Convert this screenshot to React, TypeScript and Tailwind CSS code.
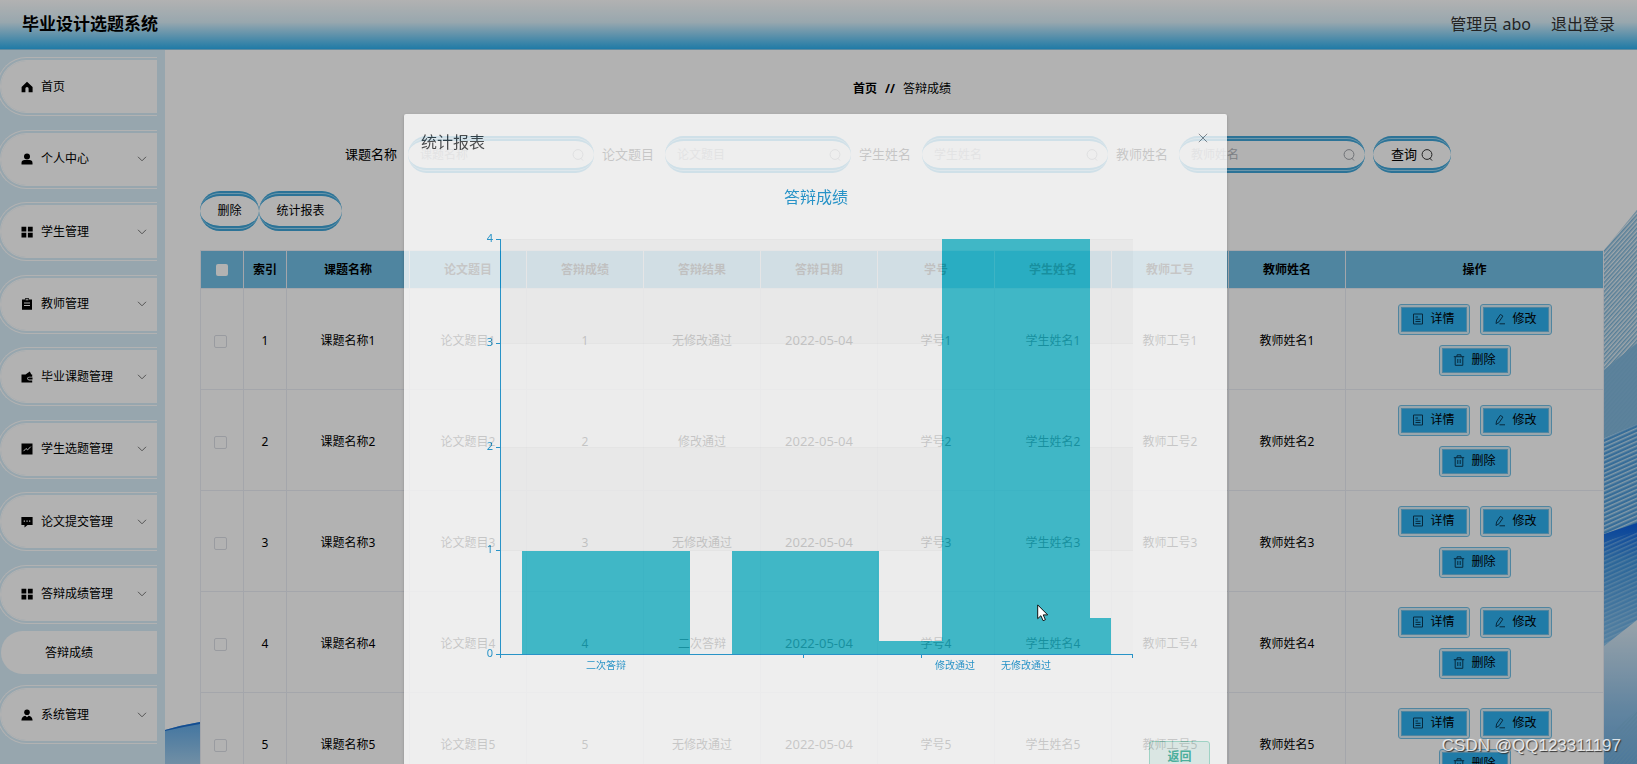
import React from 'react'

const menu = [
  { label: '首页', icon: 'home' },
  { label: '个人中心', icon: 'user', arrow: true },
  { label: '学生管理', icon: 'grid', arrow: true },
  { label: '教师管理', icon: 'order', arrow: true },
  { label: '毕业课题管理', icon: 'wallet', arrow: true },
  { label: '学生选题管理', icon: 'marketing', arrow: true },
  { label: '论文提交管理', icon: 'comment', arrow: true },
  { label: '答辩成绩管理', icon: 'grid', arrow: true },
]

const filters = ['课题名称', '论文题目', '学生姓名', '教师姓名']

const columns = [
  '课题名称',
  '论文题目',
  '答辩成绩',
  '答辩结果',
  '答辩日期',
  '学号',
  '学生姓名',
  '教师工号',
  '教师姓名',
]

const results = ['无修改通过', '修改通过', '无修改通过', '二次答辩', '无修改通过']

const MenuIcon = ({ name }: { name: string }) => (
  <svg viewBox="0 0 12 12" className="size-3 shrink-0" fill="#000" aria-hidden="true">
    {name === 'home' && <path d="M6 .8 11.6 6v5.2H7.6V7.6a1.6 1.6 0 0 0-3.2 0v3.6H.6V6z" />}
    {name === 'user' && (
      <>
        <circle cx="6" cy="3.4" r="3" />
        <path d="M.5 11.5V10c0-2 1.3-2.9 3-2.9h5c1.7 0 3 .9 3 2.9v1.5z" />
      </>
    )}
    {name === 'grid' && <path d="M.5.7h4.8v4.8H.5zM6.900.7h4.800v4.800H6.900zM.5 6.800h4.800v4.800H.5zM6.900 6.800h4.800v4.800H6.900z" />}
    {name === 'order' && (
      <path
        fillRule="evenodd"
        d="M1 1.500h3V.3h4v1.200h3v10.300H1zM3 4.500v1h6v-1zM3 7v1h6V7zM4.600 1.200v1h2.800v-1z"
      />
    )}
    {name === 'wallet' && (
      <path
        fillRule="evenodd"
        d="M.5 3.600h4L8.800.6l1.500 3h.9v2.200H8a1.700 1.700 0 0 0 0 3.600h3.200v2H.5zM8 6.600h3.500v2H8a1 1 0 0 1 0-2z"
      />
    )}
    {name === 'marketing' && (
      <>
        <path d="M.5.5h11v11H.5z" />
        <path d="M2.500 8.200 5 5.500l1.600 1.400L9.800 3.600" fill="none" stroke="#fff" strokeWidth="1" />
      </>
    )}
    {name === 'comment' && (
      <path
        fillRule="evenodd"
        d="M.4 1h11.200v8H6.500l-3 2.600V9H.4zM2.700 4.400v1.300H4V4.400zM5.400 4.400v1.300h1.300V4.400zM8 4.400v1.300h1.300V4.400z"
      />
    )}
    {name === 'admin' && (
      <>
        <circle cx="6" cy="3.200" r="2.800" />
        <path d="M.4 11.500c0-2.800 1.600-4.400 4-4.800L6 8.200l1.600-1.500c2.400.4 4 2 4 4.800z" />
      </>
    )}
  </svg>
)

const Chevron = () => (
  <svg viewBox="0 0 10 6" className="ml-auto h-1.5 w-2.5" fill="none" stroke="#777" aria-hidden="true">
    <path d="M1 .8 5 4.800 9 .8" />
  </svg>
)

const SearchIcon = ({ color }: { color: string }) => (
  <svg viewBox="0 0 12 12" className="size-3 shrink-0" fill="none" stroke={color} aria-hidden="true">
    <circle cx="6" cy="5.500" r="4.900" />
    <path d="M8.600 9 11 11.500" />
  </svg>
)

const ActionIcon = ({ name }: { name: string }) => (
  <svg viewBox="0 0 12 12" className="size-3 shrink-0" fill="none" stroke="#0b3c58" aria-hidden="true">
    {name === '详情' && <path d="M1.500 1h9v10h-9zM3.500 4H6M3.500 6.300h5M3.500 8.500h5" />}
    {name === '修改' && <path d="M2 10.500 2.600 7l3.800-5.600 2.500 1.700L5 8.800zM5.500 10.800H11" />}
    {name === '删除' && <path d="M.8 2.700h10.400M4 2.500V.8h4v1.700M2.200 2.700v8.600h7.600V2.700M4.800 5v4M7.200 5v4" />}
  </svg>
)

const MenuItem = ({ label, icon, arrow }: { label: string; icon: string; arrow?: boolean }) => (
  <li>
    <button
      type="button"
      className="-ml-[3px] flex h-[59px] w-[160px] items-center rounded-l-[30px] border-4 border-r-0 border-double border-white bg-white bg-clip-padding pl-5 pr-2.5 text-xs text-black"
    >
      <MenuIcon name={icon} />
      <span className="ml-2">{label}</span>
      {arrow && <Chevron />}
    </button>
  </li>
)

const Header = () => (
  <header className="flex h-[50px] items-center justify-between border-b border-[#8cc8e6] bg-[linear-gradient(#fff,#dbf0fa_45%,#2eb0ef)] pl-[22px] pr-[22px] pb-0.5">
    <h1 className="text-[17px] font-bold text-black">毕业设计选题系统</h1>
    <div className="flex gap-5 text-base text-[#333]">
      <span>管理员 abo</span>
      <button type="button">退出登录</button>
    </div>
  </header>
)

const Sidebar = () => (
  <nav className="w-[165px] shrink-0 bg-[#d8eefa] pt-[7px]">
    <ul className="flex h-[567px] flex-col justify-between">
      {menu.map((item) => (
        <MenuItem key={item.label} {...item} />
      ))}
    </ul>
    <a
      href="#score"
      className="ml-px mt-[7px] flex h-[43px] w-[156px] items-center rounded-l-[22px] bg-white pl-11 text-xs text-black"
    >
      答辩成绩
    </a>
    <ul className="mt-[11px]">
      <MenuItem label="系统管理" icon="admin" arrow />
    </ul>
  </nav>
)

const Backdrop = () => (
  <>
    <svg viewBox="0 0 33 554" className="absolute bottom-0 right-0 h-[554px] w-[33px]" aria-hidden="true">
      <defs>
        <pattern id="fine" width="3" height="3" patternUnits="userSpaceOnUse" patternTransform="rotate(-48)">
          <rect width="3" height="1.500" fill="#7db6da" />
        </pattern>
        <pattern id="wide" width="4" height="4" patternUnits="userSpaceOnUse" patternTransform="rotate(-24)">
          <rect width="4" height="1.500" fill="#b9dcf2" />
        </pattern>
        <linearGradient id="deep" x1="0" y1="0" x2="0" y2="1">
          <stop offset="0" stopColor="#0b5fe0" />
          <stop offset=".3" stopColor="#3f93dc" />
          <stop offset="1" stopColor="#7fbce8" />
        </linearGradient>
        <linearGradient id="pale" x1="0" y1="0" x2="0" y2="1">
          <stop offset="0" stopColor="#dceaf4" />
          <stop offset=".6" stopColor="#8fc0e6" />
          <stop offset="1" stopColor="#6cabdf" />
        </linearGradient>
      </defs>
      <path d="M0 40 33 0V554H0z" fill="#e2eef5" />
      <path d="M0 40 33 0V554H0z" fill="url(#fine)" />
      <path d="M0 160 33 133V323H0z" fill="#86bbe0" />
      <path d="M0 160 33 133V230H0z" fill="url(#fine)" opacity=".6" />
      <path d="M0 228 33 214V323H0z" fill="#4f9cda" />
      <path d="M0 228 33 214V323H0z" fill="url(#wide)" />
      <path d="M0 324 33 313V420L0 440z" fill="url(#deep)" />
      <path d="M0 332 33 321V420L0 440z" fill="url(#wide)" opacity=".4" />
      <path d="M0 436 33 410V554H0z" fill="url(#pale)" />
      <path d="M0 530 33 500V554H0z" fill="url(#fine)" opacity=".7" />
    </svg>
    <svg viewBox="0 0 35 42" className="absolute bottom-0 left-0 h-[42px] w-[35px]" aria-hidden="true">
      <defs>
        <linearGradient id="wave" x1="0" y1="0" x2="0" y2="1">
          <stop offset="0" stopColor="#5fa8e6" />
          <stop offset="1" stopColor="#a2cdec" />
        </linearGradient>
      </defs>
      <path d="M0 8Q17 3 35 0V42H0z" fill="url(#wave)" />
      <path d="M0 8Q17 3 35 0V2Q17 5 0 9z" fill="#1c6fd0" />
    </svg>
  </>
)

const pill =
  'rounded-[20px] border-y-[5px] border-double border-[#3fa5d8] [background:linear-gradient(#fff,#fff)_padding-box,#9ad6f2_border-box]'

const SearchForm = () => (
  <form className="flex justify-center text-[13px] text-black">
    {filters.map((name) => (
      <div key={name} className="mr-2 flex items-center">
        <label htmlFor={name} className="mr-[11px]">
          {name}
        </label>
        <div className={`flex h-[37px] w-[186px] items-center pl-3 pr-2.5 ${pill}`}>
          <input
            id={name}
            placeholder={name}
            className="w-full min-w-0 bg-transparent text-xs outline-none placeholder:text-[#b4b8be]"
          />
          <SearchIcon color="#a0a4aa" />
        </div>
      </div>
    ))}
    <button type="button" className={`mr-2 flex h-[37px] w-[78px] items-center justify-center gap-1 ${pill}`}>
      查询
      <SearchIcon color="#333" />
    </button>
  </form>
)

const RowButton = ({ label }: { label: string }) => (
  <button
    type="button"
    className="flex h-[31px] w-[72px] items-center justify-center gap-1.5 rounded-[3px] border-4 border-double border-[#71bfe5] [background:linear-gradient(#2eb0f0,#2eb0f0)_padding-box,#dceef7_border-box]"
  >
    <ActionIcon name={label} />
    {label}
  </button>
)

const cell = 'border border-[#ebeef5] px-0 pb-0 pt-[3px]'
const headCell = 'border border-[#ebeef5] px-0 pb-0 pt-px font-bold'

const ScoreTable = () => (
  <table className="w-full table-fixed border-collapse bg-white text-center text-xs text-black">
    <colgroup>
      <col className="w-[43px]" />
      <col className="w-[43px]" />
      <col className="w-[123px]" />
      {columns.slice(1).map((name) => (
        <col key={name} className="w-[117px]" />
      ))}
      <col className="w-[258px]" />
    </colgroup>
    <thead>
      <tr className="h-[38px] bg-[#71bfe5]">
        <th className={headCell}>
          <input
            type="checkbox"
            aria-label="全选"
            className="mx-auto block size-3 appearance-none rounded-[2px] bg-white"
          />
        </th>
        <th className={headCell}>索引</th>
        {columns.map((name) => (
          <th key={name} className={headCell}>
            {name}
          </th>
        ))}
        <th className={headCell}>操作</th>
      </tr>
    </thead>
    <tbody>
      {results.map((result, i) => {
        const n = i + 1
        return (
          <tr key={n} className="h-[101px]">
            <td className={cell}>
              <input
                type="checkbox"
                aria-label={`选择${n}`}
                className="mr-1 inline-block size-[13px] appearance-none rounded-[2px] border border-[#dcdfe6] bg-white align-middle"
              />
            </td>
            <td className={cell}>{n}</td>
            <td className={cell}>课题名称{n}</td>
            <td className={cell}>论文题目{n}</td>
            <td className={cell}>{n}</td>
            <td className={cell}>{result}</td>
            <td className={`${cell} text-[13px]`}>2022-05-04</td>
            <td className={cell}>学号{n}</td>
            <td className={cell}>学生姓名{n}</td>
            <td className={cell}>教师工号{n}</td>
            <td className={cell}>教师姓名{n}</td>
            <td className="border border-[#ebeef5] px-0 pb-0 pt-px">
              <div className="mx-auto flex w-[160px] flex-wrap justify-center gap-2.5">
                <RowButton label="详情" />
                <RowButton label="修改" />
                <RowButton label="删除" />
              </div>
            </td>
          </tr>
        )
      })}
    </tbody>
  </table>
)

const yTicks = [
  { value: 4, y: 69 },
  { value: 3, y: 173 },
  { value: 2, y: 277 },
  { value: 1, y: 380 },
  { value: 0, y: 484 },
]

const xLabels = [
  { label: '二次答辩', x: 202 },
  { label: '修改通过', x: 551 },
  { label: '无修改通过', x: 622 },
]

const Chart = () => (
  <svg viewBox="0 0 823 564" className="block w-full" role="img" aria-label="答辩成绩">
    <text x="412" y="33" textAnchor="middle" fontSize="16" fill="#008acd">
      答辩成绩
    </text>
    <path d="M97 69h632v104H97zM97 277h632v104H97z" fill="#f8f8f8" />
    <path d="M97 173h632v104H97zM97 381h632v104H97z" fill="#fdfdfd" />
    <path d="M97 69.500h632M97 173.500h632M97 277.500h632M97 380.500h632" stroke="#f2f2f2" />
    <path d="M118 484V381H286V484zM328 484V381H475V471H538V69H686V448H707V484z" fill="#1fb8cc" />
    <path
      d="M96.500 69V488M96 484.500H729M399.500 484v4M517.500 484v4M728.500 484v4M92 69.500h4M92 173.500h4M92 277.500h4M92 380.500h4M92 484.500h4"
      stroke="#008acd"
      fill="none"
    />
    {yTicks.map(({ value, y }) => (
      <text key={value} x="89" y={y + 3} textAnchor="end" fontSize="11" fill="#008acd">
        {value}
      </text>
    ))}
    {xLabels.map(({ label, x }) => (
      <text key={label} x={x} y="499" textAnchor="middle" fontSize="10" fill="#008acd">
        {label}
      </text>
    ))}
  </svg>
)

const ReportDialog = () => (
  <div className="absolute inset-0 flex justify-center bg-black/30 pr-1.5 pt-[114px]">
    <div
      role="dialog"
      aria-label="统计报表"
      className="h-fit w-[823px] rounded-[2px] bg-white opacity-[78%] shadow-[0_1px_3px_rgba(0,0,0,0.3)]"
    >
      <div className="flex h-14 items-center justify-between pl-[17px] pr-[19px]">
        <h2 className="text-base text-[#303133]">统计报表</h2>
        <button type="button" aria-label="关闭" className="mb-2">
          <svg viewBox="0 0 10 10" className="size-2.5" stroke="#7c8087" aria-hidden="true">
            <path d="M.8.8 9.200 9.200M9.200.8.8 9.200" />
          </svg>
        </button>
      </div>
      <Chart />
      <div className="flex justify-end pb-5 pr-[17px] pt-[7px]">
        <button
          type="button"
          className="h-8 w-[61px] rounded-[3px] border border-[#9adbc9] bg-[#e6f5f1] text-xs font-bold text-[#2fae96]"
        >
          返回
        </button>
      </div>
    </div>
  </div>
)

const App = () => (
  <div className="relative h-screen overflow-hidden bg-white font-['Noto_Sans','Noto_Sans_CJK_SC',sans-serif]">
    <Header />
    <div className="flex h-[calc(100vh-50px)]">
      <Sidebar />
      <main className="relative min-w-0 flex-1 overflow-hidden">
        <Backdrop />
        <div className="relative pl-[35px] pr-[33px] pt-[29px]">
          <p className="mb-[37px] flex justify-center gap-2 text-xs leading-5 text-black">
            <a href="#home" className="font-bold">
              首页
            </a>
            <b>//</b>
            <span>答辩成绩</span>
          </p>
          <SearchForm />
          <div className="mb-[19px] mt-[18px] flex text-xs text-black">
            <button type="button" className={`h-10 w-[59px] ${pill}`}>
              删除
            </button>
            <button type="button" className={`h-10 w-[83px] ${pill}`}>
              统计报表
            </button>
          </div>
          <ScoreTable />
        </div>
      </main>
    </div>
    <ReportDialog />
    <svg viewBox="0 0 12 18" className="absolute left-[1037px] top-[604px] h-[18px] w-3" aria-hidden="true">
      <path d="M.7.9v13.800l3.200-3 2.200 5 2.300-1-2.200-4.800h4.500z" fill="#fff" stroke="#111" />
    </svg>
    <p className="absolute bottom-1.5 right-4 font-['Liberation_Sans',sans-serif] text-[17px] leading-6 text-white/80 [text-shadow:1px_1px_1px_#333]">
      CSDN @QQ123311197
    </p>
  </div>
)

export default App
